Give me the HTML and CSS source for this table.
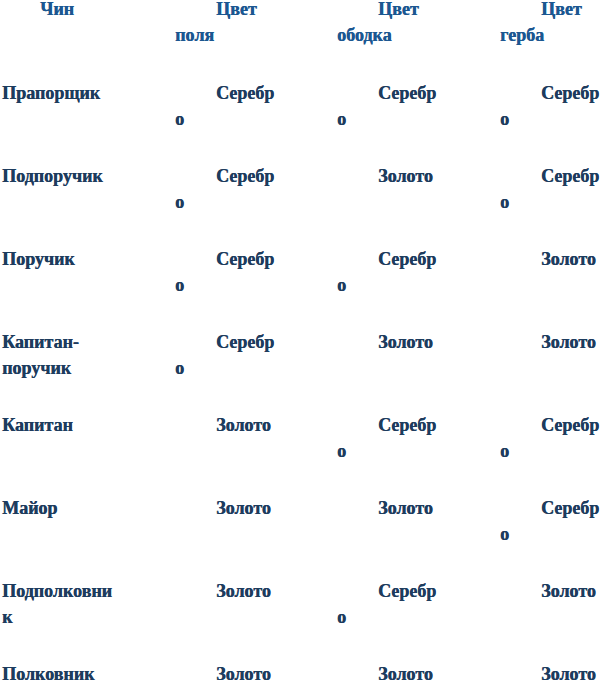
FILE: index.html
```html
<!DOCTYPE html>
<html>
<head>
<meta charset="utf-8">
<title>Чины</title>
<link rel="stylesheet" href="styles.css">
</head>
<body>
<div class="table">
  <div class="row head">
    <p class="cell c1">Чин</p>
    <p class="cell c2">Цвет поля</p>
    <p class="cell c3">Цвет ободка</p>
    <p class="cell c4">Цвет герба</p>
  </div>
  <div class="row">
    <p class="cell c1">Прапорщик</p>
    <p class="cell c2">Серебр<wbr>о</p>
    <p class="cell c3">Серебр<wbr>о</p>
    <p class="cell c4">Серебр<wbr>о</p>
  </div>
  <div class="row">
    <p class="cell c1">Подпоручик</p>
    <p class="cell c2">Серебр<wbr>о</p>
    <p class="cell c3">Золото</p>
    <p class="cell c4">Серебр<wbr>о</p>
  </div>
  <div class="row">
    <p class="cell c1">Поручик</p>
    <p class="cell c2">Серебр<wbr>о</p>
    <p class="cell c3">Серебр<wbr>о</p>
    <p class="cell c4">Золото</p>
  </div>
  <div class="row">
    <p class="cell c1">Капитан-поручик</p>
    <p class="cell c2">Серебр<wbr>о</p>
    <p class="cell c3">Золото</p>
    <p class="cell c4">Золото</p>
  </div>
  <div class="row">
    <p class="cell c1">Капитан</p>
    <p class="cell c2">Золото</p>
    <p class="cell c3">Серебр<wbr>о</p>
    <p class="cell c4">Серебр<wbr>о</p>
  </div>
  <div class="row">
    <p class="cell c1">Майор</p>
    <p class="cell c2">Золото</p>
    <p class="cell c3">Золото</p>
    <p class="cell c4">Серебр<wbr>о</p>
  </div>
  <div class="row">
    <p class="cell c1">Подполковни<wbr>к</p>
    <p class="cell c2">Золото</p>
    <p class="cell c3">Серебр<wbr>о</p>
    <p class="cell c4">Золото</p>
  </div>
  <div class="row">
    <p class="cell c1">Полковник</p>
    <p class="cell c2">Золото</p>
    <p class="cell c3">Золото</p>
    <p class="cell c4">Золото</p>
  </div>
</div>
</body>
</html>
```

FILE: styles.css
```css
html, body {
  margin: 0;
  padding: 0;
  background: #ffffff;
  overflow: hidden;
}

.table {
  margin-top: -4px;
  display: flex;
  flex-direction: column;
}

.row {
  display: grid;
  grid-template-columns: 175px 162px 163px 100px;
  height: 83px;
}

.cell {
  margin: 0;
  font-family: "Liberation Serif";
  font-weight: bold;
  font-size: 18px;
  line-height: 26px;
  color: #1d3c5e;
  text-shadow: 0.4px 0 0 #1d3c5e;
}

.head .cell {
  color: #1b5791;
  text-shadow: 0.5px 0 0 #1b5791;
}

.row.head {
  height: 84px;
}

.c1 {
  width: 120px;
  padding-left: 2px;
}

.head .c1 {
  text-indent: 38px;
}

.c2,
.c3,
.c4 {
  width: 102px;
  text-indent: 41px;
}
```
